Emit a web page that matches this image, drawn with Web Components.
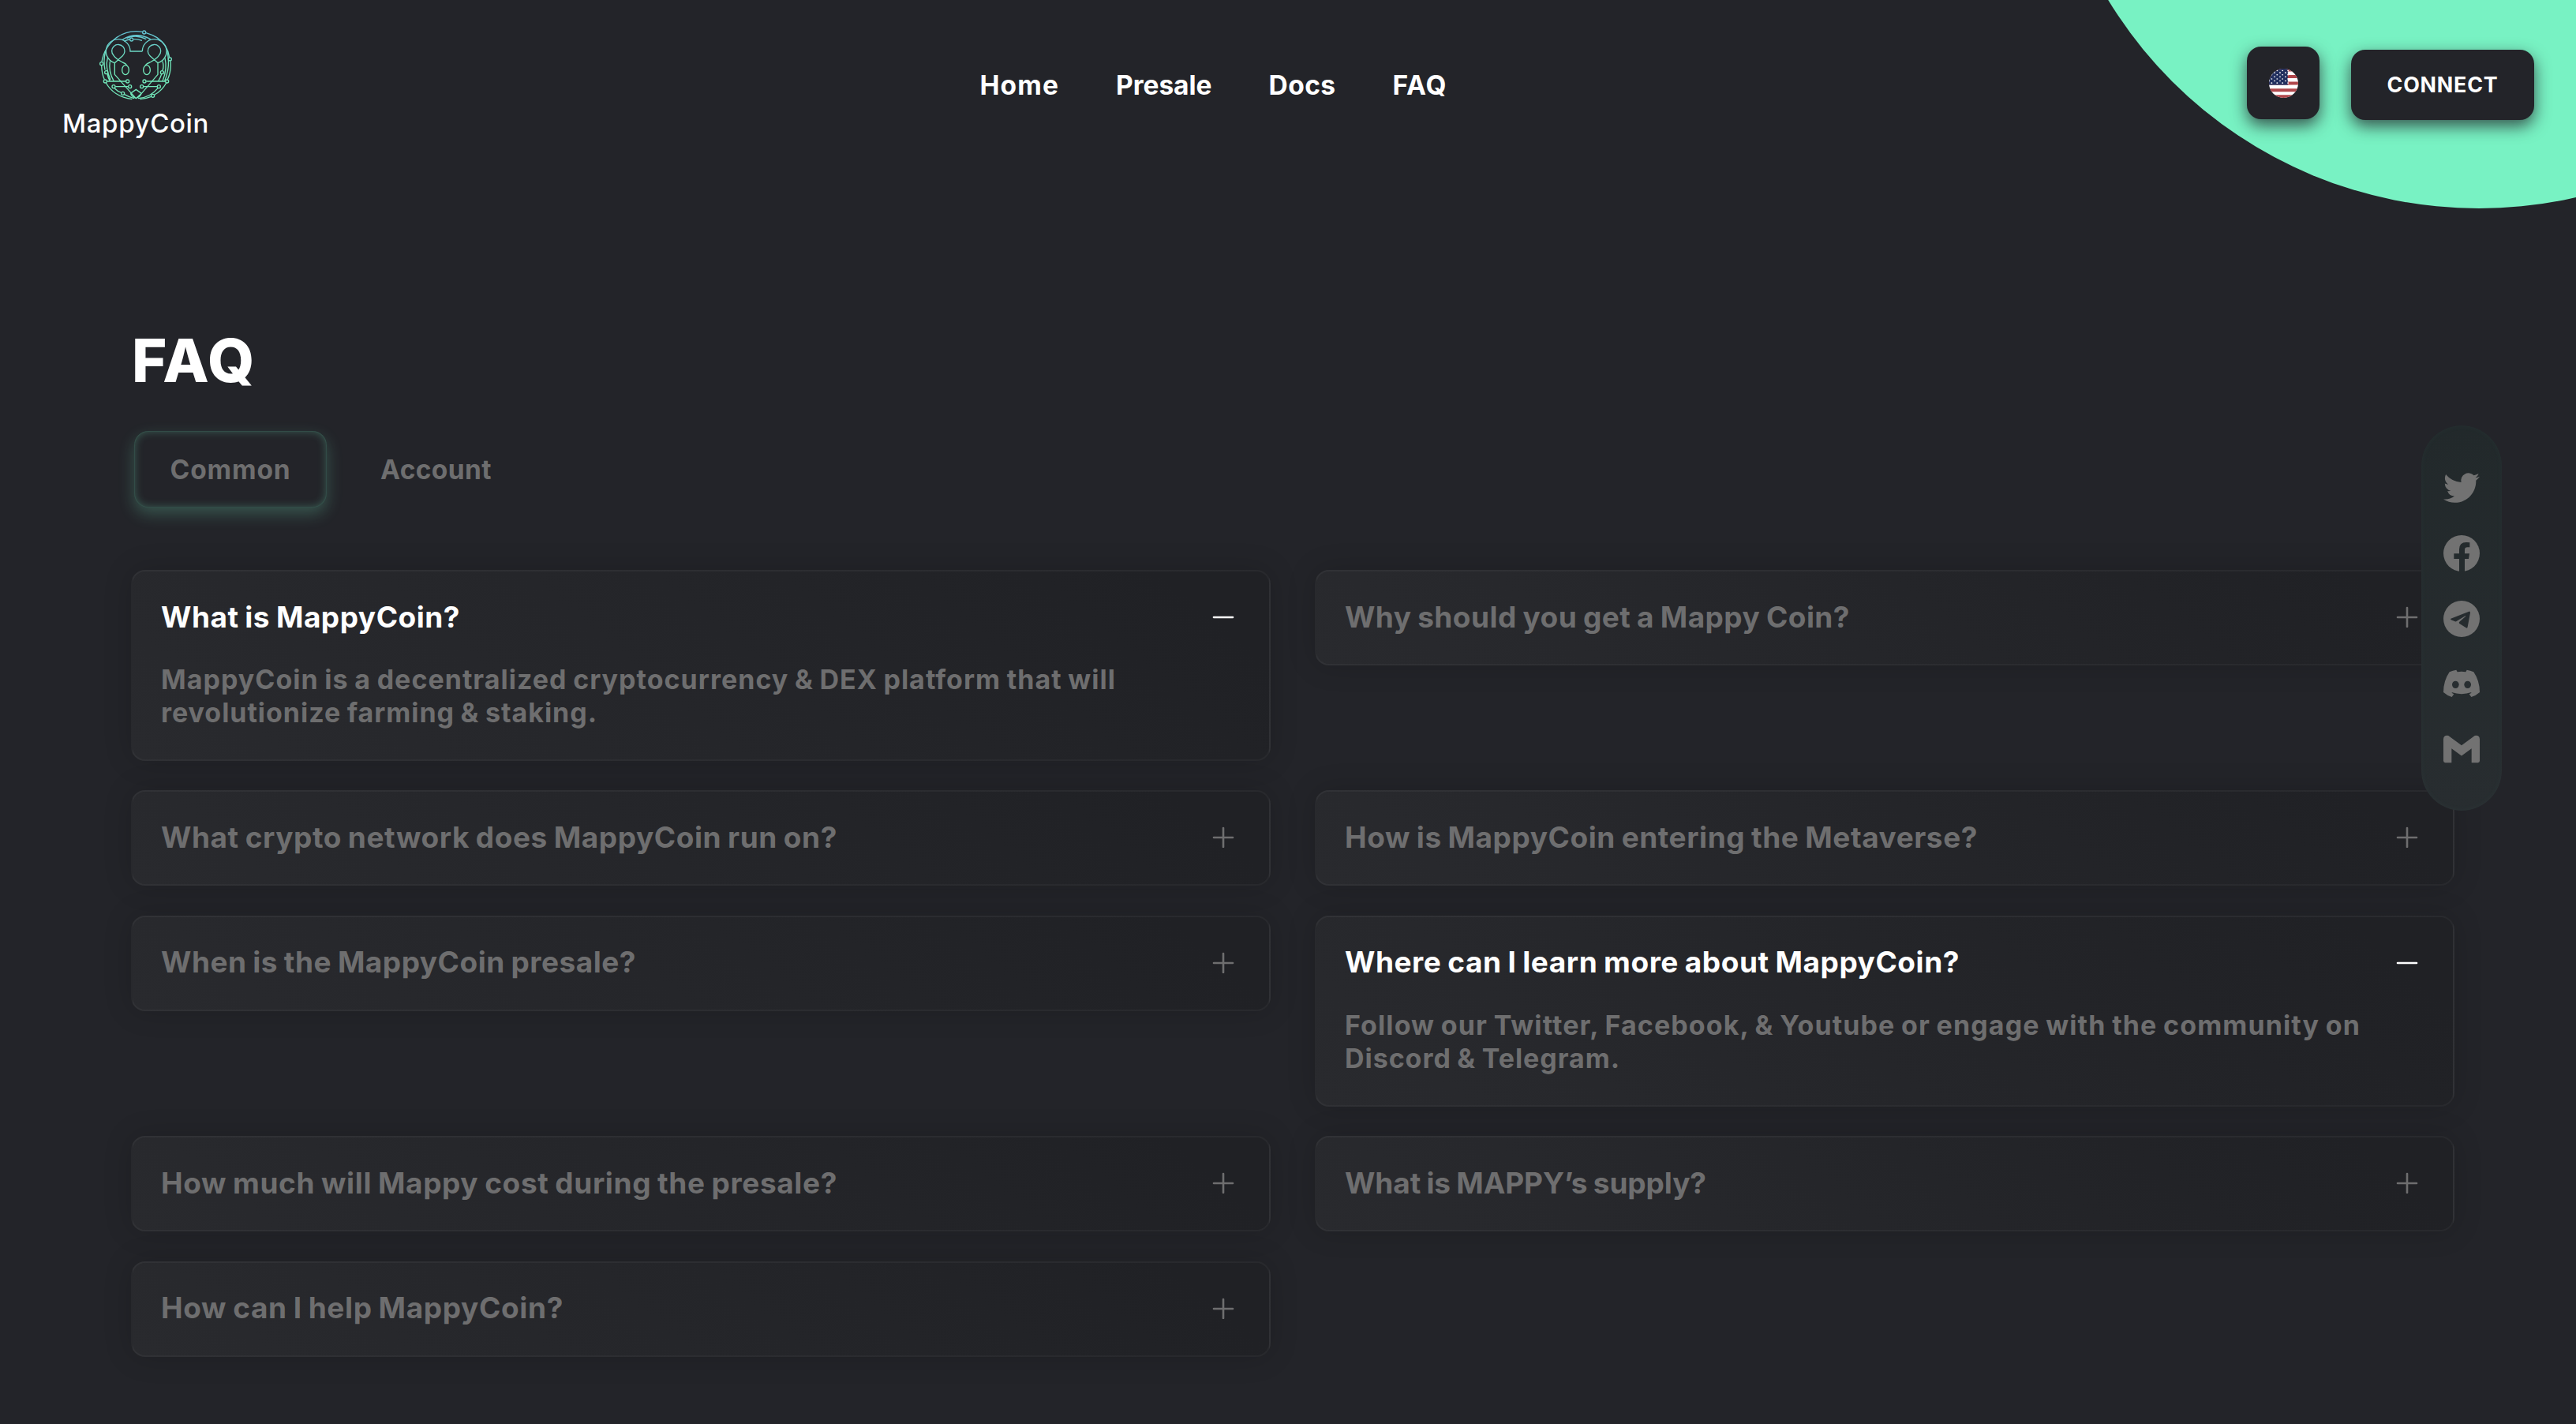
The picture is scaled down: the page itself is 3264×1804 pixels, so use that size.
<!DOCTYPE html>
<html lang="en">
<head>
<meta charset="utf-8">
<title>MappyCoin FAQ</title>
<style>
html,body{margin:0;background:#232429}
body{font-family:Inter,"Liberation Sans",sans-serif;color:#fff;font-weight:700;word-spacing:-.09em}
</style>
</head>
<body>
<mappy-page></mappy-page>
<script>
const define = (name, html, init) => {
  const t = document.createElement('template');
  t.innerHTML = html;
  customElements.define(name, class extends HTMLElement {
    constructor() {
      super();
      this.attachShadow({mode: 'open'}).appendChild(t.content.cloneNode(true));
    }
    connectedCallback() { if (init) init.call(this, this.shadowRoot); }
  });
};

// A single line of text whose tracking is tuned to a given advance width.
define('fit-text', `<style>:host{display:block;white-space:nowrap;width:max-content}span{display:inline-block}</style><span><slot></slot></span>`,
function (root) {
  const span = root.querySelector('span');
  const target = parseFloat(this.getAttribute('w'));
  if (!target) return;
  const n = [...this.textContent].length;
  span.style.letterSpacing = '0px';
  const natural = span.getBoundingClientRect().width;
  span.style.letterSpacing = ((target - natural) / n) + 'px';
});

define('mappy-logo', `
<style>
:host{display:flex;flex-direction:column;align-items:flex-start;width:190px;font-size:33px;font-weight:500;line-height:40px}
svg{display:block;width:94px;height:90px;margin-left:47px}
fit-text{margin:9.500px 0 -.5px 1px}
</style>
<svg viewBox="195 50 282 270" fill="none" stroke="url(#g)" stroke-width="4">
  <defs><linearGradient id="g" gradientUnits="userSpaceOnUse" x1="0" y1="50" x2="0" y2="190"><stop offset="0" stop-color="#62bfd6"/><stop offset="1" stop-color="#72e8ba"/></linearGradient></defs>
  <path d="M361 60A132 132 0 0 0 264 81Q216 118 207 174M206 188Q207 220 217 241M223 254Q252 306 322 316M352 316Q378 313 395 306M407 299Q436 284 452 254M457 241Q472 208 468 171M464 157Q456 108 417 82Q396 70 375 64"/>
  <path d="M286 89Q338 58 392 88M302 84Q338 68 376 88M328 88Q344 87 360 93M292 96Q302 90 313 89"/>
  <path d="M315 134A46 46 0 1 0 256 178M361 134A46 46 0 1 1 420 178M313 134H361"/>
  <path d="M256 178L286 151A24.500 24.500 0 1 0 252 150Q260 162 286 176Q298 180 303 188M420 178L390 151A24.500 24.500 0 1 1 424 150Q416 162 390 176Q378 180 372 188"/>
  <ellipse cx="297" cy="205" rx="13" ry="18"/><ellipse cx="378" cy="205" rx="13" ry="18"/>
  <path d="M256 178V222L320 294L337 313L358 294L420 222V178M316 294L337 279L358 294M316 294Q322 308 337 313M358 294Q352 308 337 313"/>
  <path d="M221 134Q212 168 219 205M228 221Q231 235 238 247M229 159Q219 195 240 242M238 172Q232 212 252 246M455 134Q464 168 458 205Q454 228 446 247M447 159Q457 200 438 247M438 172Q444 192 438 207M434 221Q429 236 422 247"/>
  <path d="M227 248H298M259 268H307M376 248H448M366 268H417M256 275Q267 287 281 291M293 298Q312 309 330 313M420 274Q392 310 345 313"/>
  <circle cx="368" cy="62" r="6"/><circle cx="320" cy="89" r="6"/><circle cx="206" cy="181" r="6"/><circle cx="466" cy="164" r="6"/><circle cx="224" cy="214" r="6"/><circle cx="436" cy="214" r="6"/><circle cx="220" cy="248" r="6"/><circle cx="305" cy="248" r="6"/><circle cx="252" cy="268" r="6"/><circle cx="314" cy="268" r="6"/><circle cx="369" cy="248" r="6"/><circle cx="455" cy="248" r="6"/><circle cx="359" cy="268" r="6"/><circle cx="424" cy="268" r="6"/><circle cx="287" cy="294" r="6"/><circle cx="401" cy="303" r="6"/>
</svg>
<fit-text w="186">MappyCoin</fit-text>`);

define('us-flag', `
<style>:host{display:block}svg{display:block;width:37px;height:37px}</style>
<svg viewBox="0 0 37 44" preserveAspectRatio="none"><defs><clipPath id="c"><ellipse cx="18.500" cy="22" rx="18.500" ry="22"/></clipPath></defs>
<g clip-path="url(#c)"><rect width="37" height="44" fill="#fff"/>
<path fill="#b0474b" d="M0 0h37v4.200H0zM0 9.500h37v4.800H0zM0 19.500h37v4.800H0zM0 30h37v4.800H0zM0 39.500h37v5H0z"/>
<rect width="23.800" height="24.500" fill="#22305f"/>
<g fill="#fff" id="stars"></g></g></svg>`,
function (root) {
  const g = root.querySelector('#stars');
  let s = '';
  for (let r = 0; r < 7; r++) for (let c = 0; c < 4; c++)
    s += `<circle cx="${(r % 2 ? 0 : 3.2) + c * 6.9 + .2}" cy="${3 + r * 3.1}" r=".95"/>`;
  g.innerHTML = s;
});

define('dark-button', `
<style>:host{display:flex;align-items:center;justify-content:center;box-sizing:border-box;background:#232429;border-radius:18px;box-shadow:0 8px 20px rgba(35,36,41,.75)}</style><slot></slot>`);

define('site-header', `
<style>
:host{display:flex;align-items:center;height:216px;padding:0 53px 0 78px;box-sizing:border-box;position:relative;overflow:visible}
.blob{position:absolute;z-index:0;left:2591px;top:-836px;width:673px;height:1100px;overflow:hidden}
.blob i{display:block;width:1100px;height:1100px;border-radius:50%;background:#78f2c3}
mappy-logo{margin-bottom:4px}
nav{display:flex;gap:72px;margin-left:973.500px;font-size:33.500px}
.actions{display:flex;align-items:center;gap:40px;margin-left:auto;position:relative;z-index:1}
.lang{width:92px;height:92px;margin-bottom:6px}
.connect{width:232px;height:89px;font-size:26.800px;margin-bottom:1px}
.connect fit-text{margin-bottom:2px}
</style>
<div class="blob"><i></i></div>
<mappy-logo></mappy-logo>
<nav><fit-text w="100.500">Home</fit-text><fit-text w="121.500">Presale</fit-text><fit-text w="85">Docs</fit-text><fit-text w="69">FAQ</fit-text></nav>
<div class="actions"><dark-button class="lang"><us-flag></us-flag></dark-button><dark-button class="connect"><fit-text w="141">CONNECT</fit-text></dark-button></div>`);

define('faq-tabs', `
<style>
:host{display:flex;align-items:center;height:97px;font-size:33.500px;color:#6e6e6f}
.on{display:flex;align-items:center;justify-content:center;width:244px;height:97px;border-radius:18px;box-shadow:0 8px 20px rgba(120,242,195,.24),inset 0 0 12px rgba(120,242,195,.3),inset 0 0 0 1px rgba(120,242,195,.07)}
.off{margin-left:68px}
</style>
<div class="on"><fit-text w="153">Common</fit-text></div><fit-text class="off" w="141">Account</fit-text>`);

define('faq-item', `
<style>
:host{display:block;box-sizing:border-box;min-height:121px;padding:0 44px 0 36px;border:2px solid rgba(255,255,255,.04);border-radius:18px;background:linear-gradient(40deg,#292a2e,#25262a 45%,#202125 92%);box-shadow:0 0 36px rgba(0,0,0,.16);color:#6e6e6f}
:host([open]){height:242px}
.head{display:flex;align-items:center;justify-content:space-between;height:114px;font-size:37px}
:host([open]) .head{color:#fff}
.body{display:none;font-size:34px;line-height:42px;margin-top:2.200px}
:host([open]) .body{display:block}
svg{display:block;width:28px;height:28px}
:host([open]) .v{display:none}
</style>
<div class="head"><slot name="q"></slot><svg viewBox="0 0 28 28" stroke="currentColor" stroke-width="2.600" stroke-linecap="round"><path d="M2 15H26"/><path class="v" d="M14 3V27"/></svg></div>
<div class="body"><slot></slot></div>`);

define('social-bar', `
<style>
:host{position:absolute;right:94px;top:539px;width:102px;height:488px;box-sizing:border-box;border-radius:51px;padding-top:56px;display:flex;flex-direction:column;align-items:center;gap:36.800px;background:linear-gradient(#22292b,#282d30);box-shadow:inset 0 0 10px rgba(120,242,195,.04);color:#727272}
svg{display:block;width:46px;height:46px;flex:none;fill:currentColor}
</style>
<svg viewBox="0 0 24 24"><path d="M23.953 4.570a10 10 0 01-2.825.775 4.958 4.958 0 002.163-2.723c-.951.555-2.005.959-3.127 1.184a4.920 4.920 0 00-8.384 4.482C7.690 8.095 4.067 6.130 1.640 3.162a4.822 4.822 0 00-.666 2.475c0 1.710.870 3.213 2.188 4.096a4.904 4.904 0 01-2.228-.616v.060a4.923 4.923 0 003.946 4.827 4.996 4.996 0 01-2.212.085 4.936 4.936 0 004.604 3.417 9.867 9.867 0 01-6.102 2.105c-.390 0-.779-.023-1.170-.067a13.995 13.995 0 007.557 2.209c9.053 0 13.998-7.496 13.998-13.985 0-.210 0-.420-.015-.630A9.935 9.935 0 0024 4.590z"/></svg>
<svg viewBox="0 0 138 138"><circle cx="69" cy="69" r="69"/><path fill="#242b2d" d="M60 138V90H40V70H60V54Q60 27 87 27Q94 27 100 28V46H91Q81 46 81 56V70H99L96 90H81V138Z"/></svg>
<svg viewBox="0 0 138 138"><circle cx="69" cy="69" r="69"/><path fill="#262c2f" d="M28 68Q26 70 29 73L44 79Q48 80 51 77L83 58Q86 57 84 60L60 81Q58 84 61 87L86 103Q91 106 92 100L102 46Q102 40 97 41Z"/></svg>
<svg viewBox="0 -17 138 138"><path d="M23 8Q36 2 49 0L53 8Q69 5 85 8L89 0Q102 2 115 8Q138 42 138 85Q125 97 106 103L98 92Q104 90 107 85Q69 98 31 85Q34 90 40 92L32 103Q13 97 0 85Q0 42 23 8Z"/><g fill="#272d30"><ellipse cx="46" cy="56" rx="13" ry="14"/><ellipse cx="92" cy="56" rx="13" ry="14"/></g></svg>
<svg viewBox="0 -17.500 138 138"><path d="M0 14Q0 0 14 0Q19 0 24 4L69 37L114 4Q119 0 124 0Q138 0 138 14V96Q138 103 131 103H107V49L69 77L31 49V103H7Q0 103 0 96Z"/></svg>`);

define('mappy-page', `
<style>
:host{display:flex;flex-direction:column;width:3264px;height:1804px;overflow:hidden;position:relative;background:#232429}
main{display:flex;flex-direction:column;padding:0 154px 0 166px}
h1{margin:194.500px 0 0 1px;font-size:76px;line-height:90px;font-weight:800}
faq-tabs{margin:45.500px 0 0 4px}
.grid{display:grid;grid-template-columns:1444px 1444px;column-gap:56px;row-gap:37.400px;align-items:start;margin-top:79px}
</style>
<site-header></site-header>
<main>
<h1><fit-text w="157">FAQ</fit-text></h1>
<faq-tabs></faq-tabs>
<div class="grid">
<faq-item open><fit-text slot="q" w="379">What is MappyCoin?</fit-text><fit-text w="1210">MappyCoin is a decentralized cryptocurrency &amp; DEX platform that will</fit-text><fit-text w="553">revolutionize farming &amp; staking.</fit-text></faq-item>
<faq-item><fit-text slot="q" w="640">Why should you get a Mappy Coin?</fit-text></faq-item>
<faq-item><fit-text slot="q" w="857">What crypto network does MappyCoin run on?</fit-text></faq-item>
<faq-item><fit-text slot="q" w="802">How is MappyCoin entering the Metaverse?</fit-text></faq-item>
<faq-item><fit-text slot="q" w="602">When is the MappyCoin presale?</fit-text></faq-item>
<faq-item open><fit-text slot="q" w="779">Where can I learn more about MappyCoin?</fit-text><fit-text w="1287">Follow our Twitter, Facebook, &amp; Youtube or engage with the community on</fit-text><fit-text w="349">Discord &amp; Telegram.</fit-text></faq-item>
<faq-item><fit-text slot="q" w="857">How much will Mappy cost during the presale?</fit-text></faq-item>
<faq-item><fit-text slot="q" w="458">What is MAPPY’s supply?</fit-text></faq-item>
<faq-item><fit-text slot="q" w="510">How can I help MappyCoin?</fit-text></faq-item>
</div>
</main>
<social-bar></social-bar>`);
</script>
</body>
</html>
